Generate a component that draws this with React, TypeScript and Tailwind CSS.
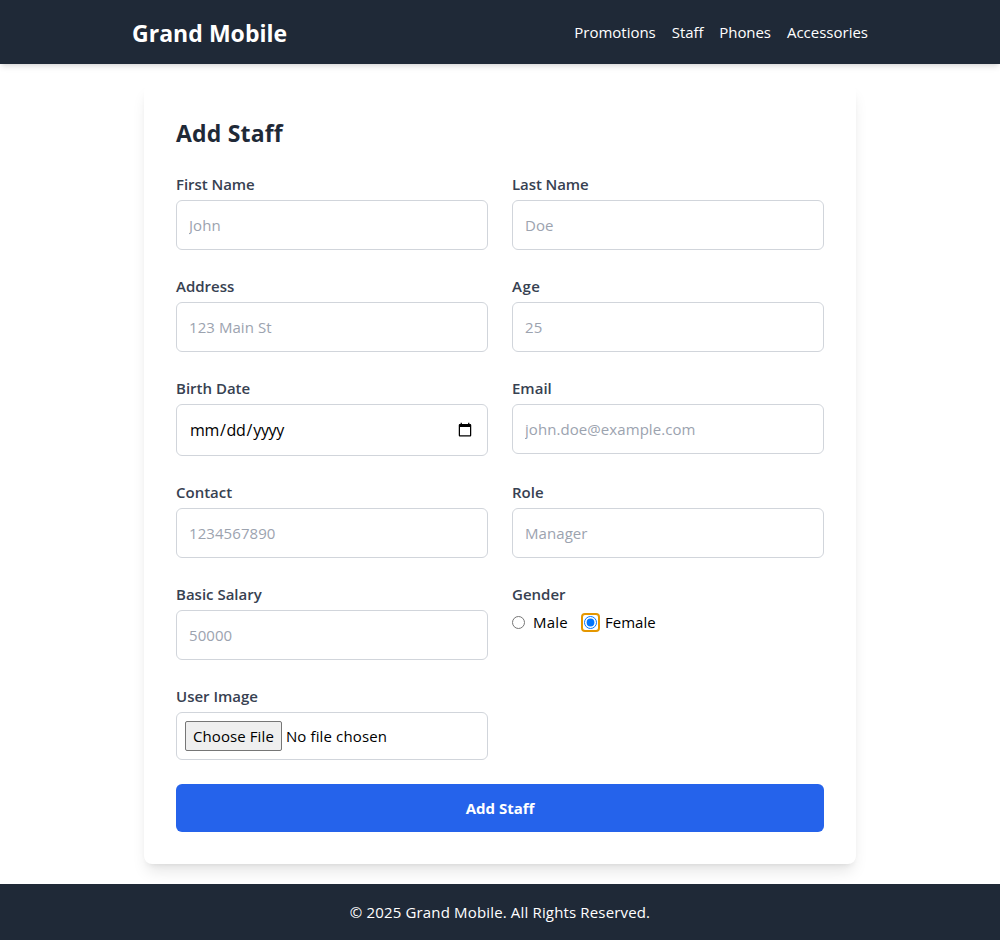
import React from 'react';

const inputClass =
  'mt-1 block w-full h-[50px] rounded-md border border-[#d1d5db] bg-white px-3 text-[15px] text-black outline-none placeholder:text-[#9ca3af] tracking-[0.07px]';

type FieldProps = {
  label: string;
  labelClass?: string;
  children: React.ReactNode;
};

function Field({ label, labelClass = '', children }: FieldProps) {
  return (
    <div>
      <label className={`block h-6 text-[15px] leading-6 font-semibold text-[#374151] ${labelClass}`}>{label}</label>
      {children}
    </div>
  );
}

export default function App() {
  return (
    <div className="flex min-h-[940px] flex-col bg-white font-['Open_Sans','Noto_Sans',sans-serif] text-[15px] leading-6 text-black">
      <header className="relative h-16 bg-[#1f2937] text-white shadow-[0_4px_6px_-1px_rgba(0,0,0,0.1),0_2px_4px_-2px_rgba(0,0,0,0.1)]">
        <div className="mx-auto flex h-full w-[768px] items-center justify-between px-4">
          <h1 className="pt-0.5 text-[23px] leading-8 font-bold tracking-[0.04px]">Grand Mobile</h1>
          <nav className="flex gap-4">
            <a className="tracking-[-0.02px]">Promotions</a>
            <a className="tracking-[-0.08px]">Staff</a>
            <a className="tracking-[-0.08px]">Phones</a>
            <a>Accessories</a>
          </nav>
        </div>
      </header>

      <main className="mx-auto my-5 w-[712px] rounded-lg bg-white px-8 pt-[33px] pb-8 shadow-[0_10px_15px_-3px_rgba(0,0,0,0.1),0_4px_6px_-4px_rgba(0,0,0,0.1)]">
        <h2 className="mb-[23px] text-[23px] leading-8 font-bold tracking-[0.18px] text-[#1f2937]">Add Staff</h2>
        <form onSubmit={(e) => e.preventDefault()}>
          <div className="grid grid-cols-2 gap-6">
            <Field label="First Name" labelClass="tracking-[-0.05px]">
              <input className={inputClass} placeholder="John" />
            </Field>
            <Field label="Last Name" labelClass="tracking-[-0.08px]">
              <input className={inputClass} placeholder="Doe" />
            </Field>
            <Field label="Address">
              <input className={inputClass} placeholder="123 Main St" />
            </Field>
            <Field label="Age" labelClass="tracking-[0.5px]">
              <input className={inputClass} placeholder="25" />
            </Field>
            <Field label="Birth Date">
              <input
                type="date"
                className="mt-1 block h-[52px] w-full rounded-md border border-[#d1d5db] bg-white px-3 text-base tracking-[-0.3px] text-black outline-none"
              />
            </Field>
            <Field label="Email">
              <input className={inputClass} placeholder="john.doe@example.com" />
            </Field>
            <Field label="Contact">
              <input className={inputClass} placeholder="1234567890" />
            </Field>
            <Field label="Role">
              <input className={inputClass} placeholder="Manager" />
            </Field>
            <Field label="Basic Salary">
              <input className={inputClass} placeholder="50000" />
            </Field>
            <Field label="Gender">
              <div className="mt-1 flex h-6 items-center">
                <input type="radio" name="gender" className="size-[13px]" />
                <span className="ml-2 w-12 tracking-[0.2px]">Male</span>
                <span className="flex size-[19px] items-center justify-center rounded-[4px] border-2 border-[#e59700]">
                  <input type="radio" name="gender" defaultChecked className="size-[13px]" />
                </span>
                <span className="ml-[5px]">Female</span>
              </div>
            </Field>
            <Field label="User Image">
              <input
                type="file"
                className="mt-1 block h-12 w-full rounded-md border border-[#d1d5db] p-2 text-[15px] leading-6 tracking-[0.13px] file:mr-1 file:h-[30px] file:rounded-[2px] file:border file:border-solid file:border-[#767676] file:bg-[#efefef] file:px-[7px] file:text-black file:tracking-[0.09px]"
              />
            </Field>
          </div>
          <button className="mt-6 block h-12 w-full rounded-md bg-[#2563eb] text-[15px] font-bold text-white">
            Add Staff
          </button>
        </form>
      </main>

      <footer className="flex h-14 items-center justify-center bg-[#1f2937] text-white">
        <p className="tracking-[0.16px]">© 2025 Grand Mobile. All Rights Reserved.</p>
      </footer>
    </div>
  );
}
